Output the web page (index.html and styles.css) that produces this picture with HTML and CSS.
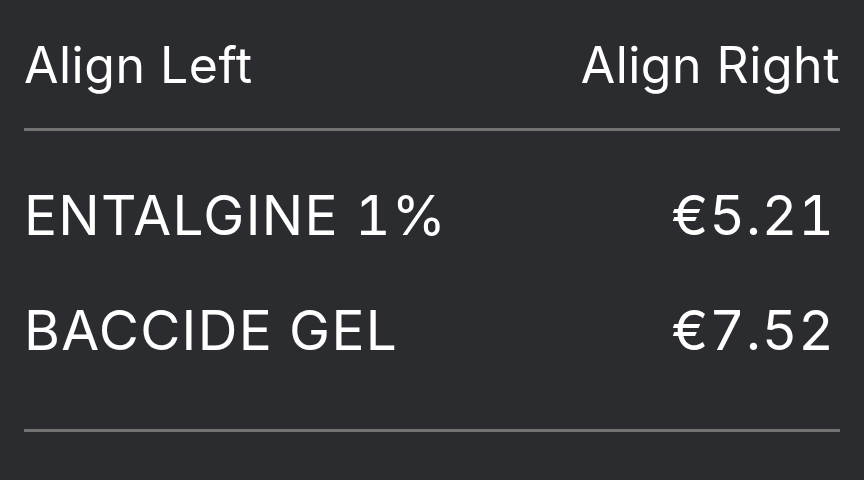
FILE: index.html
```html
<!DOCTYPE html>
<html>
<head>
<meta charset="utf-8">
<link rel="stylesheet" href="styles.css">
</head>
<body>
<div class="table">
  <div class="head">
    <span>Align Left</span>
    <span>Align Right</span>
  </div>
  <div class="rows">
    <div class="row"><span>ENTALGINE 1%</span><span class="price">€5.21</span></div>
    <div class="row"><span>BACCIDE GEL</span><span class="price">€7.52</span></div>
  </div>
  <div class="rule"></div>
</div>
</body>
</html>
```
FILE: styles.css
```css
html, body {
  margin: 0;
  padding: 0;
  background: #2b2c30;
  height: 100%;
}
.table {
  padding: 0 24px;
  font-family: Inter, "Noto Sans", sans-serif;
  color: #ffffff;
}
.head {
  display: flex;
  justify-content: space-between;
  font-size: 50px;
  line-height: 60px;
  letter-spacing: 0.5px;
  padding: 35px 0 33px;
  border-bottom: 3px solid #737373;
}
.rows {
  display: flex;
  flex-direction: column;
  gap: 49px;
  padding: 51px 0 66px;
}
.row {
  display: flex;
  justify-content: space-between;
  font-size: 55px;
  line-height: 66px;
  letter-spacing: 1.3px;
  font-variant-numeric: tabular-nums;
}
.price {
  letter-spacing: 1px;
  padding-right: 5px;
}
.rule {
  height: 3px;
  background: #737373;
}
```
